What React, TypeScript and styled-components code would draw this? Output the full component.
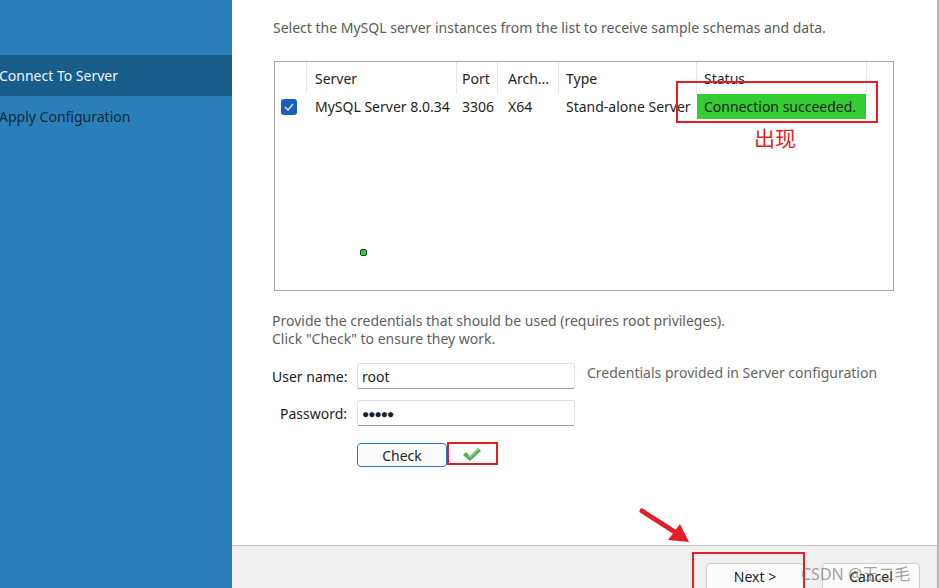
import React from "react";
import styled, { createGlobalStyle } from "styled-components";

const GlobalStyle = createGlobalStyle`
  html, body {
    margin: 0;
    padding: 0;
    background: #ffffff;
    overflow: hidden;
  }
  * { box-sizing: border-box; }
`;

const Page = styled.div`
  position: relative;
  display: flex;
  width: 939px;
  height: 588px;
  overflow: hidden;
  font-family: "Noto Sans", "Open Sans", sans-serif;
  font-size: 14px;
  color: #1e1e1e;
`;

const Sidebar = styled.nav`
  width: 232px;
  flex-shrink: 0;
  background: #2b7fb8;
  padding-top: 55px;
  display: flex;
  flex-direction: column;
`;

const NavItem = styled.div<{ active?: boolean }>`
  height: 41px;
  display: flex;
  align-items: center;
  margin-left: -1px;
  font-size: 14px;
  color: ${({ active }) => (active ? "#f2f6fa" : "#0f2a40")};
  background: ${({ active }) => (active ? "#185d8c" : "transparent")};
`;

const Main = styled.div`
  flex: 1;
  display: flex;
  flex-direction: column;
  border-right: 2px solid #b8b8b8;
`;

const Content = styled.div`
  flex: 1;
  padding: 18px 0 0 41px;
`;

const Intro = styled.p`
  margin: 0;
  line-height: 20px;
  color: #5a5a5a;
`;

const TableBox = styled.div`
  margin: 23px 0 0 1px;
  width: 620px;
  height: 230px;
  border: 1px solid #a9a9a9;
`;

const Row = styled.div<{ header?: boolean }>`
  display: grid;
  grid-template-columns: 32px 150px 41px 61px 138px 170px 1fr;
  height: ${({ header }) => (header ? "32px" : "25px")};
  align-items: stretch;
`;

const HeadCell = styled.div<{ pad?: number }>`
  display: flex;
  align-items: center;
  padding-left: ${({ pad }) => pad ?? 8}px;
  border-right: 1px solid #e6e6e6;
  color: #1e1e1e;
  &:last-child { border-right: none; }
`;

const Cell = styled.div<{ pad?: number; ok?: boolean }>`
  display: flex;
  align-items: center;
  padding-left: ${({ pad }) => pad ?? 8}px;
  white-space: nowrap;
  overflow: hidden;
  background: ${({ ok }) => (ok ? "#33cc33" : "transparent")};
  margin-right: ${({ ok }) => (ok ? "1px" : "0")};
`;

const Box = styled.span`
  width: 16px;
  height: 16px;
  border-radius: 3px;
  background: #1a5fb4;
  display: inline-flex;
  align-items: center;
  justify-content: center;
  margin-left: 6px;
`;

const Dot = styled.div`
  width: 7px;
  height: 7px;
  margin: 130px 0 0 85px;
  border-radius: 2px;
  background: #22dd11;
  border: 1px solid #234;
`;

const Hint = styled.p`
  margin: 21px 0 0 -1px;
  line-height: 18px;
  color: #606060;
`;

const Form = styled.div`
  margin-top: 15px;
  display: grid;
  grid-template-columns: 75px 218px auto;
  column-gap: 10px;
  row-gap: 11px;
  align-items: center;
  margin-left: -1px;
`;

const Label = styled.label`
  text-align: right;
  white-space: nowrap;
  color: #1e1e1e;
`;

const Field = styled.div`
  height: 26px;
  border: 1px solid #e0e0e0;
  border-bottom: 1px solid #9a9a9a;
  border-radius: 2px;
  display: flex;
  align-items: center;
  padding-left: 4px;
  background: #fff;
`;

const Note = styled.div`
  color: #666;
  white-space: nowrap;
  padding-left: 2px;
  margin-top: -8px;
`;

const Dots = styled.span`
  font-size: 12px;
  letter-spacing: -1px;
`;

const CheckRow = styled.div`
  grid-column: 2 / 4;
  display: flex;
  align-items: center;
  gap: 15px;
  margin-top: 6px;
`;

const CheckButton = styled.button`
  width: 90px;
  height: 24px;
  border: 1px solid #2a78d0;
  border-radius: 4px;
  background: #fbfbfb;
  font: inherit;
  color: #1e1e1e;
  padding: 0;
`;

const Footer = styled.div`
  height: 43px;
  flex-shrink: 0;
  background: #f0f0f0;
  border-top: 1px solid #c4c4c4;
  display: flex;
  justify-content: flex-end;
  gap: 18px;
  padding: 17px 17px 0 0;
`;

const FootButton = styled.button`
  width: 98px;
  height: 32px;
  border: 1px solid #cfcfcf;
  border-radius: 4px;
  background: #fbfbfb;
  font: inherit;
  color: #1e1e1e;
  padding: 0 0 6px;
`;

const RedBox = styled.div`
  position: absolute;
  border: 2px solid #e41e26;
  pointer-events: none;
`;

const RedText = styled.div`
  position: absolute;
  left: 754px;
  top: 122px;
  font-family: "Noto Sans CJK SC", sans-serif;
  font-size: 21px;
  color: #e41e26;
`;

const Watermark = styled.div`
  position: absolute;
  left: 801px;
  top: 561px;
  font-family: "Noto Sans", "Noto Sans CJK SC", sans-serif;
  font-size: 16px;
  color: rgba(110, 110, 110, 0.65);
  white-space: nowrap;
`;

const Arrow = styled.svg`
  position: absolute;
  left: 636px;
  top: 504px;
`;

export default function App() {
  return (
    <Page>
      <GlobalStyle />
      <Sidebar>
        <NavItem active>Connect To Server</NavItem>
        <NavItem>Apply Configuration</NavItem>
      </Sidebar>
      <Main>
        <Content>
          <Intro>Select the MySQL server instances from the list to receive sample schemas and data.</Intro>
          <TableBox>
            <Row header>
              <HeadCell />
              <HeadCell>Server</HeadCell>
              <HeadCell pad={5}>Port</HeadCell>
              <HeadCell pad={10}>Arch...</HeadCell>
              <HeadCell pad={7}>Type</HeadCell>
              <HeadCell pad={7}>Status</HeadCell>
              <HeadCell />
            </Row>
            <Row>
              <Cell pad={0}>
                <Box>
                  <svg width="10" height="8" viewBox="0 0 10 8">
                    <path d="M1 4 L4 7 L9 1" stroke="#dbe8f8" strokeWidth="1.4" fill="none" />
                  </svg>
                </Box>
              </Cell>
              <Cell>MySQL Server 8.0.34</Cell>
              <Cell pad={5}>3306</Cell>
              <Cell pad={10}>X64</Cell>
              <Cell pad={7}>Stand-alone Server</Cell>
              <Cell pad={7} ok>Connection succeeded.</Cell>
              <Cell />
            </Row>
            <Dot />
          </TableBox>
          <Hint>
            Provide the credentials that should be used (requires root privileges).
            <br />
            Click "Check" to ensure they work.
          </Hint>
          <Form>
            <Label>User name:</Label>
            <Field>root</Field>
            <Note>Credentials provided in Server configuration</Note>
            <Label>Password:</Label>
            <Field>
              <Dots>●●●●●</Dots>
            </Field>
            <span />
            <CheckRow>
              <CheckButton>Check</CheckButton>
              <svg width="20" height="14" viewBox="0 0 20 14">
                <path d="M1 7 L4 4 L8 8 L16 0 L19 3 L8 13 Z" fill="#5cae5c" />
                <path d="M4 4 L8 8 L16 0 L17 1 L8 10 Z" fill="#8fd08f" />
              </svg>
            </CheckRow>
          </Form>
        </Content>
        <Footer>
          <FootButton>Next &gt;</FootButton>
          <FootButton>Cancel</FootButton>
        </Footer>
      </Main>

      <RedBox style={{ left: 676, top: 81, width: 202, height: 42 }} />
      <RedText>出现</RedText>
      <RedBox style={{ left: 447, top: 442, width: 51, height: 23 }} />
      <RedBox style={{ left: 692, top: 552, width: 113, height: 40 }} />
      <Arrow width="60" height="44" viewBox="0 0 60 44">
        <line x1="6" y1="7" x2="42" y2="30" stroke="#e41e26" strokeWidth="5" strokeLinecap="round" />
        <polygon points="53,38 32,36 44,20" fill="#e41e26" />
      </Arrow>
      <Watermark>CSDN @王二毛</Watermark>
    </Page>
  );
}
